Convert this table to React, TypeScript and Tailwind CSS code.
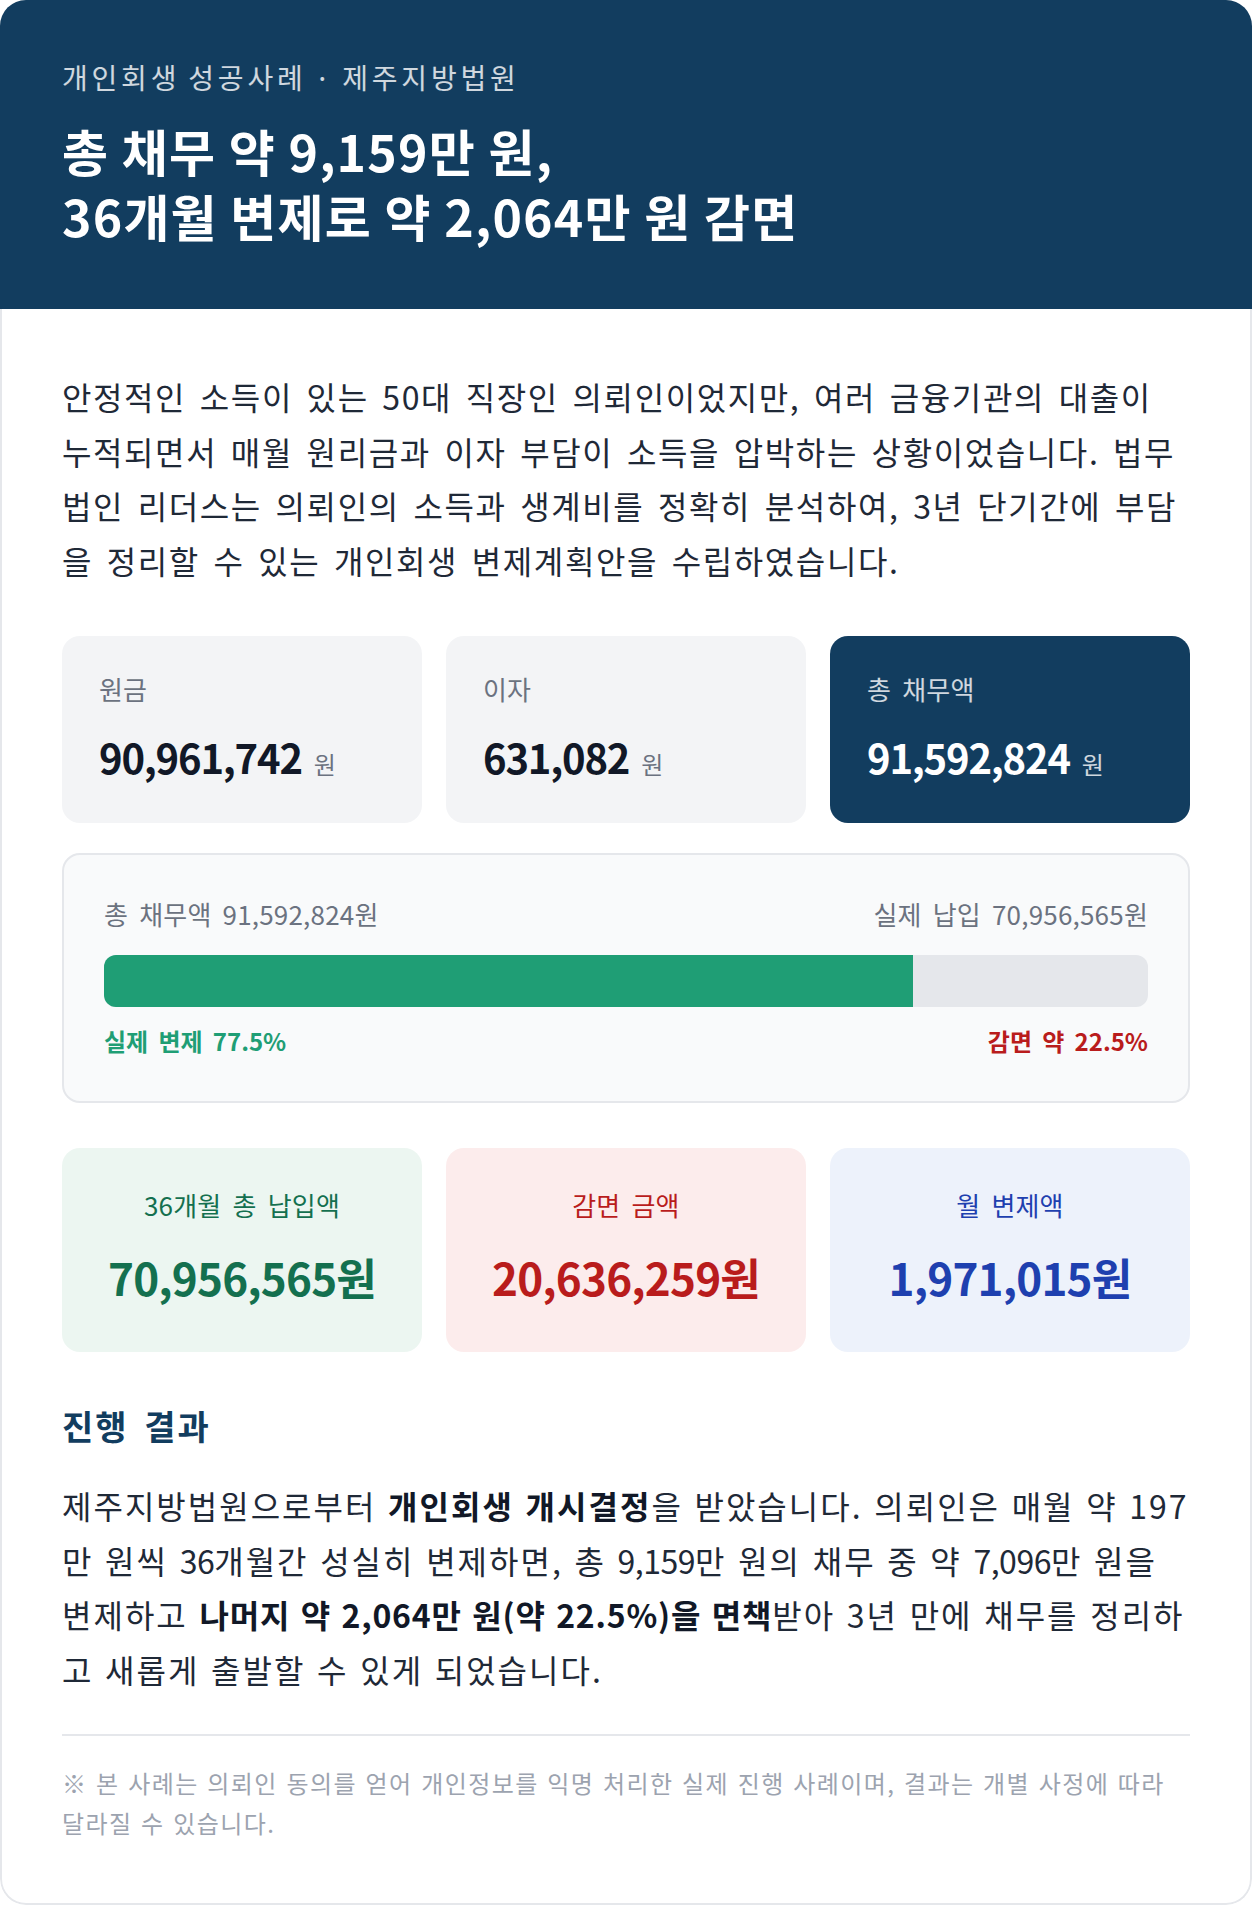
import React from "react";

// label text used in the stat cards and the progress box
const label = "text-[26px] leading-[37.5px] tracking-[0.2px] [word-spacing:5px]";
const body = "whitespace-nowrap text-[32px] leading-[54.5px] text-[#1f2937]";
// numbers in the running text sit a little tighter than the hangul
const num = "tracking-[-0.5px]";

const topStats = [
    { label: "원금", value: "90,961,742", dark: false },
    { label: "이자", value: "631,082", dark: false },
    { label: "총 채무액", value: "91,592,824", dark: true },
];

const resultStats = [
    { label: "36개월 총 납입액", value: "70,956,565원", box: "bg-[#ecf6f1]", text: "text-[#14704f]" },
    { label: "감면 금액", value: "20,636,259원", box: "bg-[#fcecec]", text: "text-[#b91c1c]" },
    { label: "월 변제액", value: "1,971,015원", box: "bg-[#edf2fb]", text: "text-[#1e40af]" },
];

const intro = [
    "안정적인 소득이 있는 50대 직장인 의뢰인이었지만, 여러 금융기관의 대출이",
    "누적되면서 매월 원리금과 이자 부담이 소득을 압박하는 상황이었습니다. 법무",
    "법인 리더스는 의뢰인의 소득과 생계비를 정확히 분석하여, 3년 단기간에 부담",
    "을 정리할 수 있는 개인회생 변제계획안을 수립하였습니다.",
];

const App = () => {
    return (
        <div className="w-[1252px] bg-white font-['Noto_Sans_CJK_KR',sans-serif]">
            <div className="overflow-hidden rounded-[26px]">
                {/* Header */}
                <div className="bg-[#123d5f] px-[62px] pt-[56px] pb-[61px]">
                    <p className="text-[28px] leading-[42px] tracking-[3.8px] text-white/80 [word-spacing:-2px]">
                        개인회생 성공사례 · 제주지방법원
                    </p>
                    <h1 className="mt-[20px] text-[50px] font-bold leading-[65px] tracking-[1.2px] text-white">
                        총 채무 약 9,159만 원,
                        <br />
                        36개월 변제로 약 2,064만 원 감면
                    </h1>
                </div>

                {/* Body */}
                <div className="rounded-b-[26px] border-2 border-t-0 border-[#e5e7eb] px-[60px] pt-[60px] pb-[60px]">
                    <p className={`${body} tracking-[1.6px] [word-spacing:4.9px]`}>
                        {intro.map((line) => (
                            <span key={line} className="block">
                                {line}
                            </span>
                        ))}
                    </p>

                    {/* Debt breakdown */}
                    <div className="mt-[49px] grid grid-cols-3 gap-[24px]">
                        {topStats.map((s) => (
                            <div
                                key={s.label}
                                className={`h-[187px] rounded-[18px] px-[37px] pt-[34px] ${s.dark ? "bg-[#123d5f]" : "bg-[#f3f4f6]"}`}
                            >
                                <p className={`${label} ${s.dark ? "text-white/80" : "text-[#6b7280]"}`}>{s.label}</p>
                                <p
                                    className={`mt-[25.5px] text-[40px] font-bold leading-[48px] tracking-[-1.2px] ${s.dark ? "text-white" : "text-[#111827]"}`}
                                >
                                    {s.value}
                                    <span
                                        className={`ml-[12px] text-[24px] font-normal tracking-normal ${s.dark ? "text-white/80" : "text-[#6b7280]"}`}
                                    >
                                        원
                                    </span>
                                </p>
                            </div>
                        ))}
                    </div>

                    {/* Progress */}
                    <div className="mt-[30px] rounded-[18px] border-2 border-[#e5e7eb] bg-[#f9fafb] px-[40px] pt-[40px] pb-[42px]">
                        <div className={`flex justify-between text-[#6b7280] ${label}`}>
                            <span>총 채무액 91,592,824원</span>
                            <span>실제 납입 70,956,565원</span>
                        </div>
                        <div className="mt-[22px] flex h-[52px] overflow-hidden rounded-[12px] bg-[#e5e7eb]">
                            <div className="h-full bg-[#1f9e75]" style={{ width: "77.5%" }} />
                        </div>
                        <div className="mt-[16px] flex justify-between text-[24px] font-bold leading-[36px] [word-spacing:4.8px]">
                            <span className="text-[#1f9e75]">실제 변제 77.5%</span>
                            <span className="text-[#b91c1c]">감면 약 22.5%</span>
                        </div>
                    </div>

                    {/* Result numbers */}
                    <div className="mt-[45px] grid grid-cols-3 gap-[24px]">
                        {resultStats.map((s) => (
                            <div key={s.label} className={`h-[204px] rounded-[18px] pt-[38px] text-center ${s.box} ${s.text}`}>
                                <p className={label}>{s.label}</p>
                                <p className="mt-[28px] text-[44px] font-bold leading-[52.8px] tracking-[-0.8px]">{s.value}</p>
                            </div>
                        ))}
                    </div>

                    <h2 className="mt-[52px] text-[34px] font-bold leading-[44.8px] tracking-[2px] text-[#123d5f] [word-spacing:6px]">
                        진행 결과
                    </h2>
                    <p className={`mt-[30px] ${body} tracking-[2px] [word-spacing:2.5px]`}>
                        제주지방법원으로부터 <strong className="font-bold text-[#111827]">개인회생 개시결정</strong>을 받았습니다.
                        의뢰인은 매월 약 197
                        <br />
                        만 원씩 <span className={num}>36</span>개월간 성실히 변제하면, 총 <span className={num}>9,159</span>만
                        원의 채무 중 약 <span className={num}>7,096</span>만 원을
                        <br />
                        변제하고{" "}
                        <strong className="font-bold tracking-[0.8px] text-[#111827]">
                            나머지 약 2,064만 원(약 22.5%)을 면책
                        </strong>
                        받아 3년 만에 채무를 정리하
                        <br />고 새롭게 출발할 수 있게 되었습니다.
                    </p>

                    <div className="mt-[38px] h-[2px] bg-[#e5e7eb]" />
                    <p className="mt-[27px] whitespace-nowrap text-[24px] leading-[40px] tracking-[1.4px] text-[#9ca3af] [word-spacing:1.9px]">
                        ※ 본 사례는 의뢰인 동의를 얻어 개인정보를 익명 처리한 실제 진행 사례이며, 결과는 개별 사정에 따라
                        <br />
                        달라질 수 있습니다.
                    </p>
                </div>
            </div>
        </div>
    );
};

export default App;
